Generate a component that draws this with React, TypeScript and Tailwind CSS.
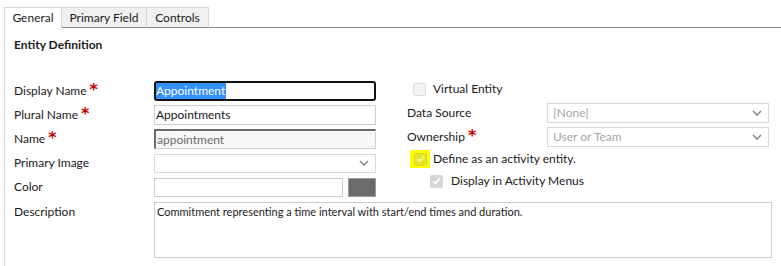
import React from "react";

const Star = () => <span className="text-[#c00000] ml-[3px] relative top-[-1px] text-[16px] leading-none font-bold" style={{ fontFamily: "'DejaVu Sans', sans-serif" }}>*</span>;

const Chevron = () => (
  <svg width="10" height="6" viewBox="0 0 10 6" className="absolute right-[6px] top-1/2 -translate-y-1/2">
    <path d="M1 1 L5 5 L9 1" fill="none" stroke="#8a8a8a" strokeWidth="1.6" />
  </svg>
);

const Check = ({ color }: { color: string }) => (
  <svg width="9" height="8" viewBox="0 0 9 8">
    <path d="M1 4.2 L3.4 6.4 L8 1.2" fill="none" stroke={color} strokeWidth="1.8" />
  </svg>
);

export default function App() {
  return (
    <div
      className="w-[781px] h-[266px] bg-white overflow-hidden text-[12px] text-[#1a1a1a]"
      style={{ fontFamily: "Lato, 'Open Sans', sans-serif" }}
    >
      {/* tabs */}
      <div className="flex items-end h-[28px] pl-[4px]">
        <div className="w-[58px] h-[21px] border-l border-t border-r border-[#d9d9d9] bg-white flex items-center justify-center">
          General
        </div>
        <div className="w-[85px] h-[21px] border-t border-r border-[#d9d9d9] border-b border-b-[#8a8a8a] bg-[#f0f0f0] flex items-center justify-center">
          Primary Field
        </div>
        <div className="w-[62px] h-[21px] border-t border-r border-[#d9d9d9] border-b border-b-[#8a8a8a] bg-[#f0f0f0] flex items-center justify-center">
          Controls
        </div>
        <div className="flex-1 h-[1px] bg-[#8a8a8a]" />
      </div>

      {/* panel */}
      <div className="ml-[4px] border-l border-[#d9d9d9] h-[238px] pl-[9px] pt-[9px]">
        <div className="font-bold leading-[16px]">Entity Definition</div>

        <div className="flex mt-[28px]">
          {/* left column */}
          <div className="w-[363px] flex flex-col gap-[4px]">
            <div className="flex items-center h-[20px]">
              <div className="w-[140px] flex items-center">Display Name<Star /></div>
              <div className="w-[222px] h-[20px] border-2 border-[#111] rounded-[3px] flex items-center">
                <span className="bg-[#3390ff] text-white leading-[16px] pr-[1px]">Appointment</span>
              </div>
            </div>
            <div className="flex items-center h-[20px]">
              <div className="w-[140px] flex items-center">Plural Name<Star /></div>
              <div className="w-[222px] h-[20px] border border-[#cccccc] flex items-center pl-[1px]">Appointments</div>
            </div>
            <div className="flex items-center h-[20px]">
              <div className="w-[140px] flex items-center">Name<Star /></div>
              <div className="w-[222px] h-[20px] border-t-2 border-l-2 border-[#6a6a6a] border-r border-b border-r-[#cfcfcf] border-b-[#cfcfcf] bg-[#f7f7f7] text-[#6b6b6b] flex items-center pl-[1px]">
                appointment
              </div>
            </div>
            <div className="flex items-center h-[20px]">
              <div className="w-[140px]">Primary Image</div>
              <div className="relative w-[222px] h-[19px] border border-[#d9d9d9]">
                <Chevron />
              </div>
            </div>
            <div className="flex items-center h-[20px]">
              <div className="w-[140px]">Color</div>
              <div className="w-[189px] h-[19px] border border-[#cccccc]" />
              <div className="ml-[5px] w-[28px] h-[19px] bg-[#6b6b6b] border border-[#9a9a9a]" />
            </div>
          </div>

          {/* right column */}
          <div className="ml-[30px] w-[362px] flex flex-col">
            <div className="flex items-center h-[16px]">
              <div className="ml-[6px] w-[13px] h-[13px] rounded-[2px] border border-[#dcdcdc] bg-[#f3f3f3]" />
              <div className="ml-[7px]">Virtual Entity</div>
            </div>
            <div className="flex items-center h-[20px] mt-[6px]">
              <div className="w-[140px]">Data Source</div>
              <div className="relative w-[222px] h-[20px] border border-[#d9d9d9] text-[#a6a6a6] flex items-center pl-[5px]">
                [None]
                <Chevron />
              </div>
            </div>
            <div className="flex items-center h-[20px] mt-[4px]">
              <div className="w-[140px] flex items-center">Ownership<Star /></div>
              <div className="relative w-[222px] h-[20px] border border-[#d9d9d9] text-[#a6a6a6] flex items-center pl-[5px]">
                User or Team
                <Chevron />
              </div>
            </div>
            <div className="flex items-center h-[18px] mt-[3px]">
              <div className="ml-[3px] w-[20px] h-[18px] bg-[#ffff00] flex items-center justify-center">
                <div className="w-[13px] h-[13px] rounded-[2px] bg-[#e6e62a] border border-[#dada20] flex items-center justify-center">
                  <Check color="#f4f48a" />
                </div>
              </div>
              <div className="ml-[3px]">Define as an activity entity.</div>
            </div>
            <div className="flex items-center h-[14px] mt-[6px]">
              <div className="ml-[23px] w-[13px] h-[13px] rounded-[2px] bg-[#d6d6d6] flex items-center justify-center">
                <Check color="#ffffff" />
              </div>
              <div className="ml-[8px]">Display in Activity Menus</div>
            </div>
          </div>
        </div>

        {/* description */}
        <div className="flex mt-[5px]">
          <div className="w-[140px] pt-[1px]">Description</div>
          <div className="w-[618px] h-[56px] border border-[#cccccc] pl-[2px] pt-[2px] text-[11px] leading-[14px]">
            Commitment representing a time interval with start/end times and duration.
          </div>
        </div>
      </div>
    </div>
  );
}
